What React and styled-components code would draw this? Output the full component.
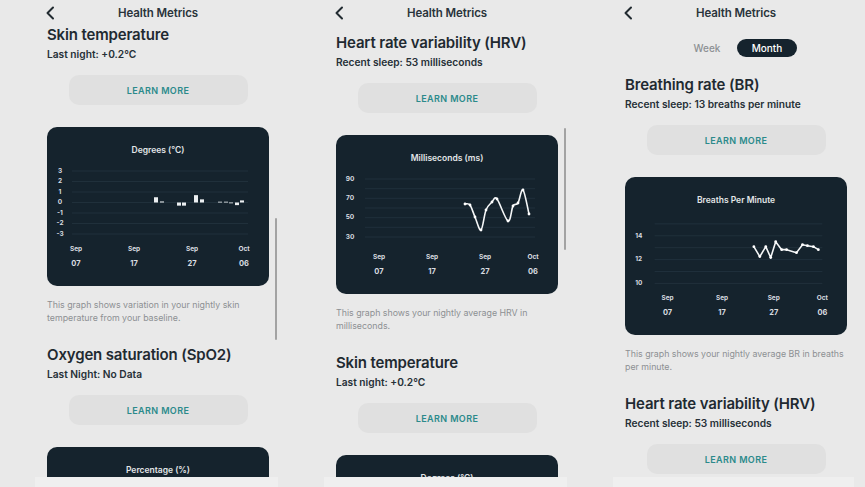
import React from "react";
import styled, { createGlobalStyle } from "styled-components";

const GlobalStyle = createGlobalStyle`
  html, body {
    margin: 0;
    padding: 0;
    background: #e9e9e9;
    font-family: Inter, "Noto Sans", "Liberation Sans", sans-serif;
    -webkit-font-smoothing: antialiased;
  }
`;

// smooth curve through points (catmull-rom -> bezier)
function smoothPath(pts) {
  let d = `M${pts[0][0]},${pts[0][1]}`;
  for (let i = 0; i < pts.length - 1; i++) {
    const p0 = pts[i - 1] || pts[i];
    const p1 = pts[i];
    const p2 = pts[i + 1];
    const p3 = pts[i + 2] || p2;
    const c1x = p1[0] + (p2[0] - p0[0]) / 6;
    const c1y = p1[1] + (p2[1] - p0[1]) / 6;
    const c2x = p2[0] - (p3[0] - p1[0]) / 6;
    const c2y = p2[1] - (p3[1] - p1[1]) / 6;
    d += ` C${c1x},${c1y} ${c2x},${c2y} ${p2[0]},${p2[1]}`;
  }
  return d;
}

function linePath(pts) {
  return pts.map((p, i) => `${i ? "L" : "M"}${p[0]},${p[1]}`).join(" ");
}

const tempChart = {
  title: "Degrees (°C)",
  grid: [44, 54.5, 65, 75.5, 86, 96.5, 107],
  gridX: [25, 201],
  yLabelX: 13,
  yLabels: [
    ["3", 44], ["2", 54.5], ["1", 65], ["0", 75.5], ["-1", 86], ["-2", 96.5], ["-3", 107],
  ],
  xLabels: [[29, "07"], [87, "17"], [145, "27"], [197, "06"]],
  bars: [
    [109, 0.5], [115, 0.1], [132, -0.3], [137, -0.3], [149, 0.7], [155, 0.3],
    [173, 0.05], [179, 0.05], [184, -0.05], [190, -0.25], [195, 0.2],
  ],
  zero: 75.5,
  unit: 10.5,
};

const hrvChart = {
  title: "Milliseconds (ms)",
  grid: [44, 53.7, 63.3, 73, 82.7, 92.3, 102],
  gridX: [29, 199],
  yLabelX: 14,
  yLabels: [["90", 44], ["70", 63.3], ["50", 82.7], ["30", 102]],
  xLabels: [[43, "07"], [96, "17"], [149, "27"], [197, "06"]],
  smooth: true,
  points: [
    [129, 69], [134, 70], [139, 82], [145, 95], [150, 75], [156, 67], [161, 64],
    [172, 86], [177, 71], [182, 68], [187, 55], [193, 79],
  ],
};

const brChart = {
  title: "Breaths Per Minute",
  grid: [47, 59, 71, 83, 95, 107],
  gridX: [29, 198],
  yLabelX: 13,
  yLabels: [["14", 59], ["12", 83], ["10", 107]],
  xLabels: [[42, "07"], [97, "17"], [149, "27"], [198, "06"]],
  points: [
    [129, 70], [135, 80], [141, 70], [146, 81], [151, 65], [157, 73], [162, 73],
    [172, 76], [178, 68], [183, 69], [189, 70], [194, 73],
  ],
};

const panels = [
  {
    shift: -2,
    sections: [
      {
        title: "Skin temperature",
        sub: "Last night: +0.2°C",
        chart: tempChart,
        caption: "This graph shows variation in your nightly skin temperature from your baseline.",
      },
      { title: "Oxygen saturation (SpO2)", sub: "Last Night: No Data", peek: "Percentage (%)" },
    ],
    scrollbar: { top: 218, height: 122, right: 12 },
  },
  {
    shift: 6,
    sections: [
      {
        title: "Heart rate variability (HRV)",
        sub: "Recent sleep: 53 milliseconds",
        chart: hrvChart,
        caption: "This graph shows your nightly average HRV in milliseconds.",
      },
      { title: "Skin temperature", sub: "Last night: +0.2°C", peek: "Degrees (°C)" },
    ],
    scrollbar: { top: 128, height: 122, right: 12 },
  },
  {
    toggle: true,
    sections: [
      {
        title: "Breathing rate (BR)",
        sub: "Recent sleep: 13 breaths per minute",
        chart: brChart,
        cardHeight: 158,
        caption: "This graph shows your nightly average BR in breaths per minute.",
      },
      { title: "Heart rate variability (HRV)", sub: "Recent sleep: 53 milliseconds" },
    ],
  },
];

function Chart({ data }) {
  return (
    <>
      <ChartTitle>{data.title}</ChartTitle>
      <svg width="222" height="130" viewBox="0 29 222 130">
        {data.grid.map((y) => (
          <line key={y} x1={data.gridX[0]} x2={data.gridX[1]} y1={y} y2={y} stroke="#23343f" strokeWidth="0.8" />
        ))}
        {data.yLabels.map(([t, y]) => (
          <text key={t} x={data.yLabelX} y={y} fill="#d9dde0" fontSize="6.5" fontWeight="700" textAnchor="middle" dominantBaseline="middle">
            {t}
          </text>
        ))}
        {data.xLabels.map(([x, d]) => (
          <g key={d} fill="#d9dde0" fontWeight="700" textAnchor="middle" dominantBaseline="middle">
            <text x={x} y={122} fontSize="6.5">{d === "06" ? "Oct" : "Sep"}</text>
            <text x={x} y={136.5} fontSize="7.5">{d}</text>
          </g>
        ))}
        {data.bars &&
          data.bars.map(([x, v]) => {
            const h = Math.max(Math.abs(v) * data.unit, 0.8);
            const y = v >= 0 ? data.zero - h : data.zero;
            return <rect key={x} x={x - 2} y={y} width="4" height={h} fill="#eceff1" />;
          })}
        {data.points && (
          <>
            <path
              d={data.smooth ? smoothPath(data.points) : linePath(data.points)}
              fill="none"
              stroke="#f4f6f7"
              strokeWidth="1.6"
              strokeLinejoin="round"
            />
            {data.points.map(([x, y]) => (
              <circle key={x} cx={x} cy={y} r="1.4" fill="#ffffff" />
            ))}
          </>
        )}
      </svg>
    </>
  );
}

function Section({ s }) {
  return (
    <SectionBox>
      <Title>{s.title}</Title>
      <Sub>{s.sub}</Sub>
      <LearnButton>LEARN MORE</LearnButton>
      {s.chart && (
        <Card $h={s.cardHeight || 159}>
          <Chart data={s.chart} />
        </Card>
      )}
      {s.peek && (
        <Card $h={40}>
          <ChartTitle>{s.peek}</ChartTitle>
        </Card>
      )}
      {s.caption && <Caption>{s.caption}</Caption>}
    </SectionBox>
  );
}

function Chevron() {
  return (
    <svg width="10" height="14" viewBox="0 0 10 14">
      <path d="M8 1.5 L2.5 7 L8 12.5" fill="none" stroke="#222b31" strokeWidth="2" strokeLinecap="round" strokeLinejoin="round" />
    </svg>
  );
}

export default function App() {
  return (
    <>
      <GlobalStyle />
      <Page>
        {panels.map((p, i) => (
          <Panel key={i}>
            <Viewport>
              <Content>
                <Header>
                  <Back>
                    <Chevron />
                  </Back>
                  <HeaderTitle>Health Metrics</HeaderTitle>
                </Header>
                {p.toggle ? (
                  <Toggle>
                    <ToggleItem>Week</ToggleItem>
                    <ToggleItem $active>Month</ToggleItem>
                  </Toggle>
                ) : (
                  <Spacer $h={p.shift} />
                )}
                {p.sections.map((s, k) => (
                  <Section key={k} s={s} />
                ))}
              </Content>
              {p.scrollbar && <Scrollbar style={{ top: p.scrollbar.top, height: p.scrollbar.height, right: p.scrollbar.right }} />}
            </Viewport>
            <Footer />
          </Panel>
        ))}
      </Page>
    </>
  );
}

const Page = styled.div`
  display: grid;
  grid-template-columns: 289px 289px 1fr;
  width: 865px;
  height: 487px;
  overflow: hidden;
  background: #e9e9e9;
`;

const Panel = styled.div`
  display: flex;
  flex-direction: column;
  height: 487px;
  overflow: hidden;
`;

const Viewport = styled.div`
  position: relative;
  flex: 1;
  overflow: hidden;
`;

const Content = styled.div`
  width: 222px;
  margin-left: 47px;
  display: flex;
  flex-direction: column;
`;

const Header = styled.div`
  position: relative;
  height: 26px;
  display: flex;
  align-items: center;
  justify-content: center;
`;

const Back = styled.div`
  position: absolute;
  left: -2px;
  top: 6px;
  display: flex;
`;

const HeaderTitle = styled.div`
  font-size: 11.5px;
  font-weight: 600;
  color: #2a343b;
  letter-spacing: -0.1px;
`;

const Spacer = styled.div`
  margin-top: ${({ $h }) => $h}px;
`;

const Toggle = styled.div`
  display: flex;
  justify-content: center;
  margin: 13px 0 17px 2px;
`;

const ToggleItem = styled.div`
  width: 60px;
  height: 18px;
  border-radius: 9px;
  display: flex;
  align-items: center;
  justify-content: center;
  font-size: 10px;
  font-weight: 500;
  color: ${({ $active }) => ($active ? "#ffffff" : "#8d9194")};
  background: ${({ $active }) => ($active ? "#15232d" : "transparent")};
`;

const SectionBox = styled.div`
  display: flex;
  flex-direction: column;
  margin-bottom: 20px;
`;

const Title = styled.div`
  font-size: 15px;
  line-height: 22px;
  font-weight: 600;
  color: #1f2a31;
  letter-spacing: -0.15px;
  white-space: nowrap;
`;

const Sub = styled.div`
  margin-top: 1px;
  font-size: 10.2px;
  line-height: 14px;
  font-weight: 600;
  color: #263037;
  white-space: nowrap;
`;

const LearnButton = styled.div`
  margin: 14px auto 0;
  width: 179px;
  height: 30px;
  border-radius: 10px;
  background: #e0e0e0;
  display: flex;
  align-items: center;
  justify-content: center;
  font-size: 9px;
  font-weight: 600;
  letter-spacing: 0.4px;
  color: #2b8a8b;
`;

const Card = styled.div`
  margin-top: 22px;
  height: ${({ $h }) => $h}px;
  border-radius: 10px;
  background: #15232d;
  padding-top: 17px;
  box-sizing: border-box;
  display: flex;
  flex-direction: column;
  overflow: hidden;
`;

const ChartTitle = styled.div`
  height: 12px;
  line-height: 12px;
  text-align: center;
  font-size: 8.5px;
  font-weight: 600;
  color: #e3e6e8;
`;

const Caption = styled.div`
  margin-top: 12px;
  font-size: 8.8px;
  line-height: 13px;
  color: #8d9093;
`;

const Scrollbar = styled.div`
  position: absolute;
  width: 2px;
  border-radius: 1px;
  background: #a3a3a3;
`;

const Footer = styled.div`
  height: 10px;
  margin: 0 11px 0 35px;
  background: #efefef;
`;
